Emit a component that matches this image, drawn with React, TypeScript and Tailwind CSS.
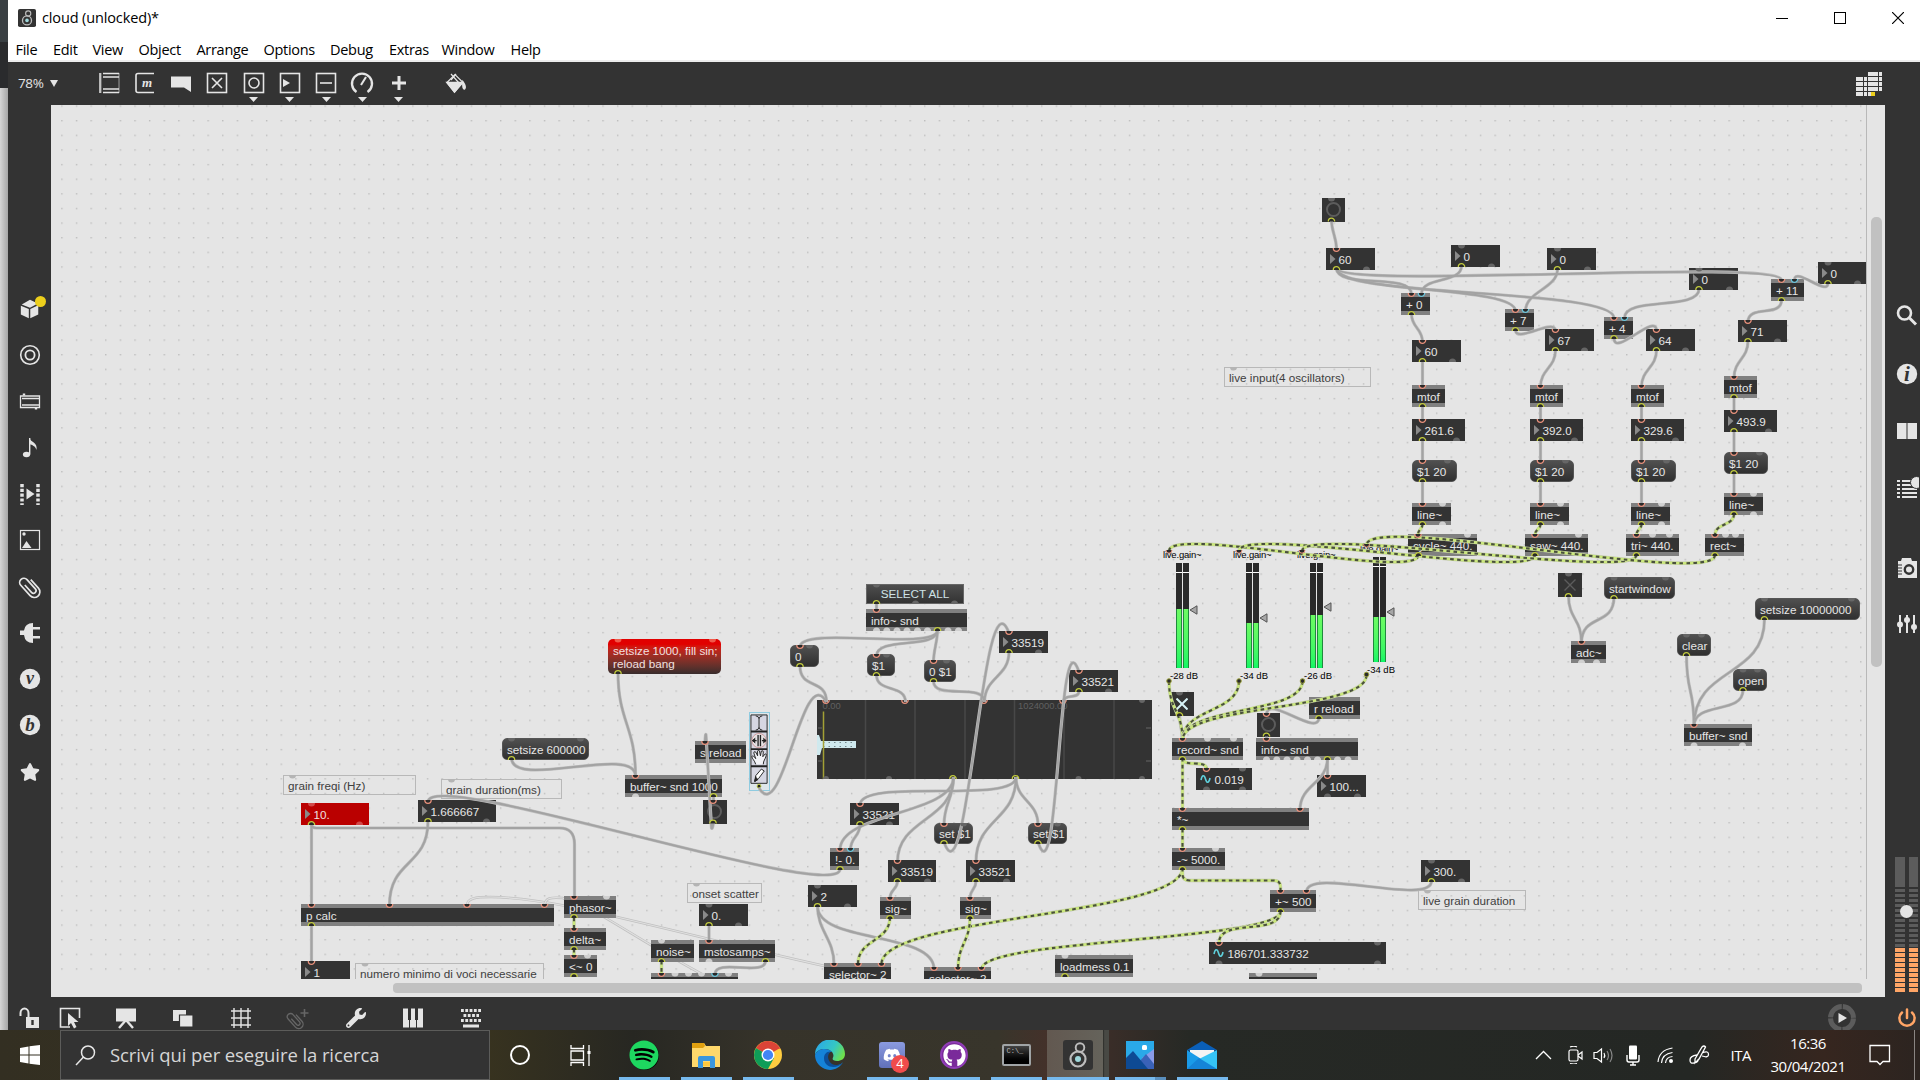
import React from "react";
import { FaSpotify, FaGithub, FaDiscord, FaWrench, FaStar } from "react-icons/fa";

const OX = 51;
const OY = 105;

type Kind = "num" | "obj" | "msg" | "note" | "bang" | "toggle" | "red" | "redmsg" | "sig" | "menu";
type Node = { k: Kind; x: number; y: number; w: number; h?: number; t?: string; i?: string; o?: string; on?: boolean };

// Port strings list "<colour><x offset>": r red, c cyan, y yellow, g unused.
const N: Node[] = [
  { k: "bang", x: 1321.5, y: 198, w: 23.5, h: 23.5, i: "g9.5", o: "y9.5" },
  { k: "num", x: 1326, y: 248, w: 49, t: "60", i: "r10", o: "y10 g40" },
  { k: "num", x: 1451, y: 245, w: 49, t: "0", i: "g10", o: "y10 g40" },
  { k: "num", x: 1547, y: 248, w: 49, t: "0", i: "g10", o: "y10 g40" },
  { k: "num", x: 1689, y: 268, w: 49, t: "0", i: "g9.5", o: "y9.5 g40" },
  { k: "num", x: 1818, y: 262, w: 49, t: "0", i: "g9.5", o: "y9.5 g39" },
  { k: "obj", x: 1401, y: 293, w: 29, t: "+ 0", i: "r10 c20", o: "y10" },
  { k: "obj", x: 1505, y: 309, w: 29, t: "+ 7", i: "r10 c20", o: "y10" },
  { k: "obj", x: 1604, y: 317, w: 29, t: "+ 4", i: "r9.5 c20", o: "y9.5" },
  { k: "obj", x: 1771, y: 279, w: 33, t: "+ 11", i: "r10 c23", o: "y10" },
  { k: "num", x: 1545, y: 329, w: 49, t: "67", i: "r10", o: "y10 g39" },
  { k: "num", x: 1646, y: 329, w: 49, t: "64", i: "r10", o: "y10 g39" },
  { k: "num", x: 1738, y: 320, w: 49, t: "71", i: "r9.5", o: "y9.5 g39" },
  { k: "num", x: 1412, y: 340, w: 49, t: "60", i: "r10", o: "y10 g40" },
  { k: "note", x: 1224, y: 367, w: 147, h: 20, t: "live input(4 oscillators)", i: "g9" },
  { k: "obj", x: 1412, y: 385, w: 33, t: "mtof", i: "r10", o: "y10" },
  { k: "obj", x: 1530, y: 385, w: 33, t: "mtof", i: "r10", o: "y10" },
  { k: "obj", x: 1631, y: 385, w: 33, t: "mtof", i: "r10", o: "y10" },
  { k: "obj", x: 1724, y: 376, w: 33, t: "mtof", i: "r9.5", o: "y9.5" },
  { k: "num", x: 1412, y: 419, w: 53, t: "261.6", i: "r10", o: "y10 g44" },
  { k: "num", x: 1530, y: 419, w: 53, t: "392.0", i: "r10", o: "y10 g44" },
  { k: "num", x: 1631, y: 419, w: 53, t: "329.6", i: "r10", o: "y10 g44" },
  { k: "num", x: 1724, y: 410, w: 53, t: "493.9", i: "r9.5", o: "y9.5 g44" },
  { k: "msg", x: 1412, y: 460, w: 45, t: "$1 20", i: "r10 g35", o: "y10" },
  { k: "msg", x: 1530, y: 460, w: 44, t: "$1 20", i: "r10 g35", o: "y10" },
  { k: "msg", x: 1631, y: 460, w: 45, t: "$1 20", i: "r10 g35", o: "y10" },
  { k: "msg", x: 1724, y: 452, w: 44, t: "$1 20", i: "r9.5 g35", o: "y9.5" },
  { k: "obj", x: 1412, y: 503, w: 39, t: "line~", i: "r10 g30", o: "y10 g30" },
  { k: "obj", x: 1530, y: 503, w: 39, t: "line~", i: "r10 g30", o: "y10 g30" },
  { k: "obj", x: 1631, y: 503, w: 39, t: "line~", i: "r10 g30", o: "y10 g30" },
  { k: "obj", x: 1724, y: 493, w: 39, t: "line~", i: "r9.5 g29", o: "y9.5 g29" },
  { k: "obj", x: 1408, y: 534, w: 69, t: "cycle~ 440.", i: "r9.5 g59", o: "y10" },
  { k: "obj", x: 1525, y: 534, w: 63, t: "saw~ 440.", i: "r9.5 g53", o: "y9.5" },
  { k: "obj", x: 1626, y: 534, w: 53, t: "tri~ 440.", i: "r10 g26 g43", o: "y10" },
  { k: "obj", x: 1705, y: 534, w: 39, t: "rect~", i: "r9.5 g20 g30", o: "y9.5" },
  { k: "toggle", x: 1170, y: 692, w: 24, h: 24, i: "g9", o: "y9", on: true },
  { k: "obj", x: 1309, y: 697, w: 51, t: "r reload", o: "y9.5" },
  { k: "bang", x: 1256.5, y: 713, w: 23.5, h: 23.5, i: "r9.5", o: "y9.5" },
  { k: "obj", x: 1172, y: 738, w: 71, t: "record~ snd", i: "r10 g35 g61", o: "y10" },
  { k: "obj", x: 1256, y: 738, w: 102, t: "info~ snd", i: "r10", o: "g10 g20.3 g30.5 g40.5 g51 g61 y71 g81 g91.5" },
  { k: "sig", x: 1196, y: 768, w: 56, t: "0.019", i: "r10 g46", o: "g10 g46" },
  { k: "num", x: 1317, y: 775, w: 49, t: "100...", i: "r10", o: "g10 g40" },
  { k: "obj", x: 1172, y: 808, w: 137, t: "*~", i: "r10 r127.5", o: "y10" },
  { k: "obj", x: 1172, y: 848, w: 53, t: "-~ 5000.", i: "r10 g43", o: "y10" },
  { k: "obj", x: 1270, y: 890, w: 46, t: "+~ 500", i: "r10 r36", o: "y10" },
  { k: "num", x: 1421, y: 860, w: 49, t: "300.", i: "g10", o: "y10 g40" },
  { k: "note", x: 1418, y: 890, w: 108, h: 20, t: "live grain duration", i: "g9" },
  { k: "sig", x: 1209, y: 942, w: 177, t: "186701.333732", i: "r9.5 g168", o: "g9.5 g168" },
  { k: "obj", x: 1249, y: 973, w: 68, i: "g9.5" },
  { k: "toggle", x: 1558, y: 573, w: 24, h: 24, i: "g10", o: "y10" },
  { k: "msg", x: 1604, y: 577, w: 71, t: "startwindow", i: "g9.5 g61", o: "y9.5" },
  { k: "msg", x: 1755, y: 598, w: 105, t: "setsize 10000000", i: "g9 g96", o: "y9" },
  { k: "msg", x: 1677, y: 634, w: 34, t: "clear", i: "g9 g24", o: "y9" },
  { k: "msg", x: 1733, y: 669, w: 34, t: "open", i: "g9.5 g24", o: "y9.5" },
  { k: "obj", x: 1684, y: 724, w: 68, t: "buffer~ snd", i: "r9.5", o: "g9.5 g58" },
  { k: "obj", x: 1571, y: 641, w: 35, t: "adc~", i: "r10", o: "g10 g25" },
  { k: "menu", x: 866, y: 584, w: 98, h: 20, t: "SELECT ALL", i: "g10", o: "y10 g49 g88" },
  { k: "obj", x: 866, y: 609, w: 101, t: "info~ snd", i: "r10", o: "g10 g20.3 g30.5 g40.5 g51 y71 g61 g81.5 g92" },
  { k: "msg", x: 790, y: 645, w: 29, t: "0", i: "r9.5 g19", o: "y9.5" },
  { k: "msg", x: 867, y: 654, w: 28, t: "$1", i: "r9 g19", o: "y9" },
  { k: "msg", x: 924, y: 660, w: 32, t: "0 $1", i: "r9 g22", o: "y9" },
  { k: "num", x: 999, y: 631, w: 49, t: "33519", i: "r9.5", o: "y9.5 g39" },
  { k: "num", x: 1069, y: 670, w: 49, t: "33521", i: "r9.5", o: "y9.5 g39" },
  { k: "obj", x: 695, y: 741, w: 51, t: "s reload", i: "r9.5" },
  { k: "obj", x: 625, y: 775, w: 97, t: "buffer~ snd 1000", i: "r10", o: "g10 y88" },
  { k: "bang", x: 703, y: 800, w: 23.5, h: 23.5, i: "r9.5", o: "y9.5" },
  { k: "num", x: 850, y: 803, w: 49, t: "33521", i: "r9.5", o: "y9.5 g39" },
  { k: "obj", x: 830, y: 848, w: 29, t: "!- 0.", i: "r9.5 c20", o: "y9.5" },
  { k: "msg", x: 934, y: 823, w: 39, h: 21, t: "set $1", i: "r9.5 g29", o: "y9.5" },
  { k: "msg", x: 1028, y: 823, w: 39, h: 21, t: "set $1", i: "r9.5 g29", o: "y9.5" },
  { k: "num", x: 888, y: 860, w: 48, t: "33519", i: "r9", o: "y9 g39" },
  { k: "num", x: 966, y: 860, w: 49, t: "33521", i: "r9.5", o: "y9.5 g40" },
  { k: "obj", x: 880, y: 897, w: 31, t: "sig~", i: "r9.5", o: "y9.5" },
  { k: "obj", x: 960, y: 897, w: 31, t: "sig~", i: "r9.5", o: "y9.5" },
  { k: "num", x: 808, y: 885, w: 49, t: "2", i: "g9", o: "y9 g39" },
  { k: "obj", x: 824, y: 963, w: 67, t: "selector~ 2", i: "r9.5 r33.5 r57" },
  { k: "obj", x: 924, y: 967, w: 67, t: "selector~ 2", i: "r9.5 r33.5 r57" },
  { k: "obj", x: 1055, y: 955, w: 78, t: "loadmess 0.1", i: "g9.5", o: "y9.5" },
  { k: "note", x: 687, y: 883, w: 75, h: 20, t: "onset scatter", i: "g9" },
  { k: "num", x: 699, y: 904, w: 49, t: "0.", i: "g9.5", o: "y9.5 g39" },
  { k: "obj", x: 699, y: 940, w: 76, t: "mstosamps~", i: "r9.5", o: "g9.5 y66" },
  { k: "obj", x: 651, y: 940, w: 43, t: "noise~", i: "g10", o: "y10" },
  { k: "obj", x: 651, y: 973, w: 87, i: "r10 g23.5 g37 g50 c63.5 g77" },
  { k: "redmsg", x: 608, y: 639, w: 113, h: 35, t: "setsize 1000, fill sin;\nreload bang", i: "g9.5 g104", o: "y9.5" },
  { k: "msg", x: 502, y: 738, w: 87, t: "setsize 600000", i: "g9 g78", o: "y9" },
  { k: "note", x: 283, y: 775, w: 133, h: 20, t: "grain freqi (Hz)", i: "g9" },
  { k: "red", x: 301, y: 803, w: 68, t: "10.", i: "g10", o: "y10 g58" },
  { k: "note", x: 441, y: 779, w: 121, h: 20, t: "grain duration(ms)", i: "g10" },
  { k: "num", x: 418, y: 800, w: 78, t: "1.666667", i: "r9.5", o: "y9.5 g68" },
  { k: "obj", x: 301, y: 904, w: 253, t: "p calc", i: "r10 r88 r165.5 r243", o: "y10" },
  { k: "num", x: 301, y: 961, w: 49, t: "1", i: "r10" },
  { k: "note", x: 355, y: 963, w: 189, h: 20, t: "numero minimo di voci necessarie", i: "g9.5" },
  { k: "obj", x: 564, y: 896, w: 52, t: "phasor~", i: "r9.5 g42", o: "y9.5" },
  { k: "obj", x: 564, y: 928, w: 42, t: "delta~", i: "r9.5", o: "y9.5" },
  { k: "obj", x: 564, y: 955, w: 33, t: "<~ 0", i: "r9.5 g23", o: "y9.5" },
];

// Cord: x1, y1, x2, y2, handle length
type C = [number, number, number, number, number];
const cords: C[] = [
  [1331, 220, 1336, 249, 12], [1336, 268, 1411, 294, 22], [1336, 268, 1515, 311, 26], [1336, 268, 1613.5, 318, 30],
  [1336, 268, 1781, 280, 22], [1461, 266, 1421, 294, 18], [1557, 269, 1525, 311, 20], [1698.5, 289, 1624, 318, 22],
  [1827.5, 283, 1794, 280, 14], [1411, 314, 1422, 342, 14], [1515, 330, 1555, 331, 14], [1613.5, 338, 1656, 331, 20],
  [1781, 300, 1747.5, 322, 18], [1422, 361, 1422, 387, 5], [1422, 406, 1422, 421, 4], [1422, 440, 1422, 462, 4],
  [1422, 481, 1422, 504, 4], [1555, 350, 1540, 387, 18], [1540, 406, 1540, 421, 4], [1540, 440, 1540, 462, 4],
  [1540, 481, 1540, 504, 4], [1656, 350, 1641, 387, 18], [1641, 406, 1641, 421, 4], [1641, 440, 1641, 462, 4],
  [1641, 481, 1641, 504, 4], [1747.5, 341, 1733.5, 378, 18], [1733.5, 397, 1733.5, 412, 4], [1733.5, 431, 1733.5, 453, 4],
  [1733.5, 473, 1733.5, 495, 4], [1179, 715, 1182, 740, 10], [1431, 881, 1306, 892, 26], [1266, 735, 1266, 740, 1],
  [1318.5, 717, 1266, 715, 22], [1327, 758, 1327, 777, 4], [1327, 758, 1299.5, 810, 26], [1568, 595, 1581, 643, 25],
  [1613.5, 597, 1581, 643, 30], [1686, 655, 1693.5, 726, 40], [1742.5, 690, 1693.5, 726, 25], [1764, 619, 1693.5, 726, 60],
  [876, 602, 876, 611, 2], [937, 630, 799.5, 647, 22], [937, 630, 876, 656, 20], [937, 630, 933, 662, 12],
  [799.5, 666, 826, 702, 24], [876, 675, 905, 702, 18], [933, 681, 984, 702, 20], [1008.5, 652, 984, 702, 25],
  [1078.5, 691, 1063, 702, 9], [953, 777, 943.5, 825, 22], [953, 777, 897, 862, 44], [953, 777, 839.5, 850, 38],
  [1015.5, 777, 859.5, 805, 28], [1015.5, 777, 975.5, 862, 44], [1015.5, 777, 1037.5, 825, 24], [859.5, 824, 850, 850, 14],
  [839.5, 869, 427.5, 802, 36], [897, 881, 889.5, 898, 9], [975.5, 881, 969.5, 898, 9], [817, 906, 833.5, 964, 25],
  [817, 906, 933.5, 969, 38], [708.5, 925, 708.5, 942, 4], [765, 961, 714.5, 974, 16], [617.5, 672, 635, 776, 50],
  [511, 758, 635, 776, 32], [311, 824, 311, 905, 10], [427.5, 821, 389, 905, 46], [311, 925, 311, 963, 6],
  [713, 796, 713, 802, 1],
];
const shapedCords = [
  "M758.5 788C782 828 802 660 826 702",
  "M943.5 842C968 912 982 563 1008.5 633",
  "M1037.5 842C1059 907 1057 607 1078.5 672",
  "M311 824Q311 828 316 828H559Q574 828 574 844V897",
  "M713 822Q712 830 711 828L705.5 735Q705 732 704.5 742",
];
const signals: C[] = [
  [1422, 524, 1417.5, 535, 6], [1540, 524, 1534.5, 535, 6], [1641, 524, 1636, 535, 6], [1733.5, 514, 1714.5, 535, 12],
  [1418, 555, 1168.5, 551, 26], [1534.5, 555, 1238.5, 551, 26], [1636, 555, 1301.5, 551, 26], [1714.5, 555, 1366, 545, 32],
  [1168.5, 681, 1182, 740, 30], [1238.5, 681, 1182, 740, 32], [1302, 681, 1182, 740, 34], [1366, 675, 1182, 740, 36],
  [1182, 758, 1206, 769, 10], [1182, 758, 1182, 810, 10], [1182, 829, 1182, 850, 4], [1182, 868, 881, 964, 48],
  [1280, 911, 981, 969, 30], [1280, 911, 1218.5, 943, 26], [889.5, 917, 857.5, 964, 25], [969.5, 917, 957.5, 969, 25],
  [661, 961, 661, 974, 3], [573.5, 918, 573.5, 930, 3], [573.5, 949, 573.5, 957, 2],
];
const cPath = ([a, b, c, d, k]: C) => `M${a} ${b}C${a} ${b + k} ${c} ${d - k} ${c} ${d}`;

function Layer({ children }: { children: React.ReactNode }) {
  return (
    <svg className="absolute inset-0 h-full w-full" viewBox="51 105 1814 874" fill="none">
      {children}
    </svg>
  );
}

const BODY: Record<Kind, string> = {
  num: "bg-[#333] text-[#e6e6e6]",
  sig: "bg-[#333] text-[#e6e6e6]",
  obj: "border-y-4 border-[#808080] bg-[#333] pl-[5px] text-[#e6e6e6]",
  msg: "rounded-[5px] bg-linear-to-b from-[#505050] to-[#303030] border border-[#555] pl-[4px] text-[#e6e6e6]",
  redmsg: "rounded-[5px] bg-linear-to-b from-[#e10000] from-15% to-[#382c2c] pl-[5px] pt-px text-[#f0e0e0]",
  note: "border-[1.5px] border-[#b8b8b8] pl-[4px] text-[#404040]",
  bang: "bg-[#333]",
  toggle: "bg-[#333]",
  red: "bg-[#ba0000] text-[#f0e0e0]",
  menu: "justify-center border border-[#666] bg-linear-to-b from-[#4e4e4e] to-[#333] pb-px text-[#cfe3e6]",
};

function Box({ n }: { n: Node }) {
  return (
    <div
      className={`absolute flex items-center overflow-hidden whitespace-pre text-[11.7px] leading-[13px] ${BODY[n.k]}`}
      style={{ left: n.x - OX, top: n.y - OY, width: n.w, height: n.h ?? 22 }}
    >
      {(n.k === "num" || n.k === "red") && (
        <svg className="ml-[4px] mr-[2.4px] h-3 w-[6px] shrink-0" viewBox="0 0 6 12"><path d="M0 1L5.5 6L0 11Z" fill="#8a8a8a" /></svg>
      )}
      {n.k === "sig" && (
        <svg className="ml-[4px] mr-[3.5px] h-3 w-[11px] shrink-0" viewBox="0 0 11 12" fill="none"><path d="M1 7C2 2 4 1 5.5 6S9 10 10 5" stroke="#5fd0dc" strokeWidth="1.6" /></svg>
      )}
      {n.k === "bang" && <span className="mx-auto size-[15px] rounded-full border-2 border-[#5c5c5c]" />}
      {n.k === "toggle" && (
        <svg className="mx-auto size-3" viewBox="0 0 12 12"><path d="M0.5 0.5L11.5 11.5M11.5 0.5L0.5 11.5" stroke={n.on ? "#d8f3f7" : "#5c5c5c"} strokeWidth={n.on ? 2 : 1.4} /></svg>
      )}
      {n.t}
    </div>
  );
}

const PORT: Record<string, string> = { r: "#e8917c", c: "#6cc6dc", y: "#c3cc3f" };

function Ports() {
  const out: React.ReactElement[] = [];
  N.forEach((n, j) => {
    const unused = n.k === "obj" ? "#d0d0d0" : n.k === "note" ? "#b4b4b4" : n.k === "red" ? "#d24a4a" : n.k === "redmsg" ? "#ef5a4a" : "#666";
    const b = n.y + (n.h ?? 22);
    (n.i ?? "").split(" ").filter(Boolean).forEach((p, q) => {
      const x = n.x + parseFloat(p.slice(1));
      out.push(p[0] === "g"
        ? <path key={`i${j}-${q}`} d={`M${x - 3.5} ${n.y}A3.5 3.5 0 0 0 ${x + 3.5} ${n.y}Z`} fill={unused} />
        : <path key={`i${j}-${q}`} d={`M${x - 3.2} ${n.y}A3.2 3.4 0 0 0 ${x + 3.2} ${n.y}`} fill="#2a2a2a" stroke={PORT[p[0]]} strokeWidth="1.3" />);
    });
    (n.o ?? "").split(" ").filter(Boolean).forEach((p, q) => {
      const x = n.x + parseFloat(p.slice(1));
      out.push(p[0] === "g"
        ? <path key={`o${j}-${q}`} d={`M${x - 3.5} ${b}A3.5 3.5 0 0 1 ${x + 3.5} ${b}Z`} fill={unused} />
        : <path key={`o${j}-${q}`} d={`M${x - 3.2} ${b}A3.2 3.4 0 0 1 ${x + 3.2} ${b}`} fill="#2a2a2a" stroke={PORT[p[0]]} strokeWidth="1.3" />);
    });
  });
  return <>{out}</>;
}

function Gain({ x, y, level, knob, db }: { x: number; y: number; level: number; knob: number; db: string }) {
  return (
    <div className="absolute w-[48px] text-[9.5px] leading-[11px] text-black" style={{ left: x - OX, top: y - OY }}>
      <div className="tracking-[-0.2px]">live.gain~</div>
      <div className="relative ml-[12.5px] mt-[3px] flex h-[105px] w-[13px] gap-px bg-[#e5e5e5]">
        {[0, 1].map((i) => (
          <div key={i} className="flex flex-1 flex-col bg-[#2a2a2a]">
            <div className="mt-[9px] h-px bg-white" />
            <div className="mt-auto border-x border-[#1f8a3d] bg-linear-to-b from-[#6cfb62] to-[#0cf765]" style={{ height: level }} />
          </div>
        ))}
        <svg className="absolute left-[13px] h-[10px] w-[9px]" style={{ top: knob }} viewBox="0 0 9 10"><path d="M1 5L8 0.8V9.2Z" fill="#a6a6a6" stroke="#555" /></svg>
      </div>
      <div className="ml-[7px] mt-[2px]">{db}</div>
    </div>
  );
}

function Waveform() {
  return (
    <div className="absolute left-[766px] top-[595px] h-[79px] w-[335px] bg-[#333]">
      <svg className="h-full w-full" viewBox="817 700 335 79">
        <path d="M865.5 700V779M915 700V779M965 700V779M1014.5 700V779M1064 700V779M1114 700V779" stroke="#484848" strokeWidth="1.5" />
        <path d="M1146 728H1151M1146 761H1151M818 728H822M818 761H822" stroke="#555" strokeWidth="1.3" />
        <path d="M817 735H819L821 741H856V748H822L820 755H817Z" fill="#cfe9ee" />
        <path d="M823 742.5H853M823 746.5H853" stroke="#5d7074" strokeWidth="0.8" strokeDasharray="1.5 4" />
        <path d="M823.5 711.5V779" stroke="#a3a035" strokeWidth="1.5" />
        <text x="822.5" y="709" fontSize="9.4" fill="#606060">0.00</text>
        <text x="1018" y="709" fontSize="9.4" fill="#606060">1024000.00</text>
        {[826, 905, 984, 1063].map((x) => <path key={x} d={`M${x - 3.2} 700A3.2 3.4 0 0 0 ${x + 3.2} 700`} fill="#2a2a2a" stroke="#e8917c" strokeWidth="1.3" />)}
        {[953, 1015.5].map((x) => <path key={x} d={`M${x - 3.2} 779A3.2 3.4 0 0 1 ${x + 3.2} 779`} fill="#2a2a2a" stroke="#c3cc3f" strokeWidth="1.3" />)}
        {[826, 889, 1078.5, 1142].map((x) => <circle key={x} cx={x} cy="779" r="3" fill="#666" />)}
        <circle cx="1142" cy="700" r="3" fill="#666" />
      </svg>
    </div>
  );
}

function ToolStrip() {
  return (
    <div className="absolute left-[698px] top-[607px] h-[79px] w-[21px] border border-[#8fcbe0] bg-[#dfe6ea]">
      <svg className="h-full w-full" viewBox="0 0 20 77" fill="none" stroke="#222">
        <path d="M1 0H18V72H1Z" fill="#d6d6e2" stroke="#222" strokeWidth="1" />
        <path d="M1 17.5H18M1 36H18M1 54H18" strokeWidth="2" />
        <path d="M6 1Q9 1 9.5 4V13Q9 16 6 16M13 1Q10 1 9.5 4M9.5 13Q10 16 13 16" />
        <circle cx="9.5" cy="27" r="7.5" fill="#e4e0e2" stroke="#cf9a9a" />
        <path d="M8.5 21V33M11 21V33M2.5 27H7M12.5 27H17" strokeWidth="1.4" />
        <path d="M5.5 24.5L2.5 27L5.5 29.5M14 24.5L17 27L14 29.5" fill="#222" />
        <path d="M6 52C5 48 2 46 2 44S5 44 6 46L4 40Q4 38 6 39L8 43L8 38Q9 36 10 38L11 43L12 38Q14 37 14 39L13.5 44L16 41Q18 41 17 43C16 47 14 48 14 52" fill="#f2f2f6" />
        <path d="M5 70L6 64L12 57L15 59L9 67ZM5 70L6.5 65" fill="#fff" />
        <path d="M5 70L6 66L8.5 68Z" fill="#222" />
        <circle cx="9.5" cy="75" r="2" fill="#222" stroke="#c3cc3f" />
      </svg>
    </div>
  );
}

function Patcher() {
  return (
    <div className="grid flex-1 grid-cols-[1816px_1fr] grid-rows-[874px_1fr] bg-[#e5e5e5]">
      <div className="relative overflow-hidden border-r border-[#b8b8b8]">
        <Layer>
          <defs>
            <pattern id="dots" x="60.7" y="105.4" width="14.625" height="14.625" patternUnits="userSpaceOnUse">
              <rect width="1.4" height="1.4" fill="#bcbcbc" />
            </pattern>
          </defs>
          <rect x="51" y="105" width="1815" height="874" fill="url(#dots)" />
          {["M466.5 905C467 898 475 897 490 897C560 898 640 925 833 968", "M544 905C545 898 550 897 562 898C600 910 620 930 703 975"].map((d) => (
            <g key={d}><path d={d} stroke="#c0c0c0" strokeWidth="2.6" /><path d={d} stroke="#e0e0e0" strokeWidth="1.2" /></g>
          ))}
        </Layer>
        {N.map((n, i) => <Box key={i} n={n} />)}
        <Waveform />
        <ToolStrip />
        <Gain x={1163} y={549} level={59} knob={42} db="-28 dB" />
        <Gain x={1233} y={549} level={45} knob={50} db="-34 dB" />
        <Gain x={1297} y={549} level={53} knob={39} db="-26 dB" />
        <Gain x={1360} y={543} level={45} knob={50} db="-34 dB" />
        <Layer>
          <g stroke="#bdbdbd" strokeWidth="3.2">
            {cords.map((c, i) => <path key={i} d={cPath(c)} />)}
            {shapedCords.map((d) => <path key={d} d={d} />)}
          </g>
          <g stroke="#a3a3a3" strokeWidth="2">
            {cords.map((c, i) => <path key={i} d={cPath(c)} />)}
            {shapedCords.map((d) => <path key={d} d={d} />)}
          </g>
          {[...signals.map(cPath), "M1182 868V874Q1182 880.5 1189 880.5H1273Q1280 880.5 1280 887V892"].map((d) => (
            <g key={d}>
              <path d={d} stroke="#c4cbae" strokeWidth="3.4" />
              <path d={d} stroke="#cbe87c" strokeWidth="2.4" />
              <path d={d} stroke="#4a503e" strokeWidth="2.1" strokeDasharray="3.6 3.4" />
            </g>
          ))}
          <Ports />
          {[[1168.5, 551], [1238.5, 551], [1301.5, 551], [1366, 545]].map(([x, y]) => <path key={x} d={`M${x - 3} ${y - 1}A3 3.2 0 0 0 ${x + 3} ${y - 1}`} fill="#2a2a2a" stroke="#e8917c" />)}
          {[[1168.5, 681], [1238.5, 681], [1302, 681], [1366, 674.5]].map(([x, y]) => <circle key={x} cx={x} cy={y} r="2.3" fill="#2a2a2a" stroke="#9aa03a" />)}
        </Layer>
      </div>
      <div className="pl-[4px] pt-[112px]"><div className="h-[450px] w-[11px] rounded-[5px] bg-[#c1c1c1]" /></div>
      <div className="pl-[342px] pt-1"><div className="h-[10px] w-[1469px] rounded-[4px] bg-[#c1c1c1]" /></div>
    </div>
  );
}

function Ico({ children, className = "size-6" }: { children: React.ReactNode; className?: string }) {
  return <svg className={`${className} shrink-0`} viewBox="0 0 24 24" fill="none" stroke="#e5e5e5" strokeWidth="1.6">{children}</svg>;
}

const clip = (
  <g transform="rotate(-42 12 12)">
    <path d="M9.5 7V17A2.600 2.600 0 0 0 14.700 17V4.500A4.200 4.200 0 0 0 6.300 4.500V18.500A5.600 5.600 0 0 0 17.500 18.500V7" strokeWidth="1.700" />
  </g>
);

const leftIcons = [
  <div className="relative">
    <Ico className="size-[22px]"><path d="M3 7L12 2L20.500 6L12 10.500ZM2 8.500L10.700 12V22L2 18ZM12.300 12L21 8V18L12.300 22Z" fill="#e5e5e5" stroke="none" /></Ico>
    <span className="absolute -right-[5px] -top-[2px] size-[11px] rounded-full bg-[#edcf1c]" />
  </div>,
  <Ico><circle cx="12" cy="12" r="9.3" /><circle cx="12" cy="12" r="4.6" strokeWidth="1.8" /></Ico>,
  <Ico><path d="M2.5 6H21.500V17.500H2.500ZM4 8.500H21M4 15H21" strokeWidth="1.3" /><path d="M6 3.500V5.500M18 17.500V19.500" strokeWidth="2.4" /></Ico>,
  <Ico><ellipse cx="8.5" cy="18.5" rx="3.6" ry="2.8" fill="#e5e5e5" stroke="none" /><path d="M11.7 18.5V2" strokeWidth="1.4" /><path d="M11.5 2C12 6 20 6 18.500 14C17.500 10 14 9 11.500 8Z" fill="#e5e5e5" stroke="none" /></Ico>,
  <Ico><path d="M4 2V23M20 2V23" strokeWidth="3.5" strokeDasharray="3.2 1.6" /><path d="M8.5 6.5L16.500 12L8.500 17.500Z" fill="#e5e5e5" stroke="none" /></Ico>,
  <Ico><rect x="2.5" y="2.5" width="19" height="19" strokeWidth="1.2" /><circle cx="6" cy="6" r="1.7" fill="#e5e5e5" stroke="none" /><path d="M4 20L8.500 13L13.500 20Z" fill="#e5e5e5" stroke="none" /></Ico>,
  <Ico>{clip}</Ico>,
  <Ico><path d="M6 9.5Q7 2 15 2V22Q7 22 6 14H2V9.500ZM15 6H22V8.500H15ZM15 15H22V17.500H15Z" fill="#e5e5e5" stroke="none" /></Ico>,
  <Ico><circle cx="12" cy="12" r="10.2" fill="#e5e5e5" stroke="none" /><text x="12" y="16.5" textAnchor="middle" fontFamily="Liberation Serif" fontStyle="italic" fontWeight="bold" fontSize="18" fill="#333" stroke="none">v</text></Ico>,
  <Ico><circle cx="12" cy="12" r="10.2" fill="#e5e5e5" stroke="none" /><text x="12" y="18" textAnchor="middle" fontFamily="Liberation Serif" fontStyle="italic" fontWeight="bold" fontSize="19" fill="#333" stroke="none">b</text></Ico>,
  <FaStar className="size-5 text-[#e5e5e5]" />,
];

const rightIcons: [string, React.ReactElement][] = [
  ["h-[58px]", <Ico><circle cx="9.5" cy="9" r="6.5" strokeWidth="2.6" /><path d="M14.5 14L21 20.500" strokeWidth="3" /></Ico>],
  ["h-[57px]", <Ico><circle cx="12" cy="12" r="10.2" fill="#e5e5e5" stroke="none" /><text x="12" y="18.5" textAnchor="middle" fontFamily="Liberation Serif" fontStyle="italic" fontWeight="bold" fontSize="21" fill="#333" stroke="none">i</text></Ico>],
  ["h-[57px]", <Ico><path d="M2 4H11.500V20H2ZM12.500 4H22V20H12.500Z" fill="#e5e5e5" stroke="none" /></Ico>],
  ["h-[57px]", <Ico><path d="M2 5H5M7 5H18M2 9H5M7 9H22M2 13H5M7 13H22M2 17H5M7 17H22M2 21H5M7 21H22" strokeWidth="2" /><circle cx="21.5" cy="6.5" r="6" fill="#e5e5e5" stroke="#333" strokeWidth="1" /></Ico>],
  ["mt-[23px] h-[56px]", <Ico><path d="M6 5L7 2H16L17 5H22V22H3V5Z" fill="#e5e5e5" stroke="none" /><circle cx="14" cy="13.5" r="4.2" stroke="#333" strokeWidth="2.4" /><path d="M3 9H7M3 12H7M3 15H7M3 18H7" stroke="#333" strokeWidth="1.2" /></Ico>],
  ["h-[12px]", <Ico><path d="M5 3V21M12 3V21M19 3V21" strokeWidth="2" /><g fill="#e5e5e5" stroke="none"><circle cx="5" cy="12.5" r="3" /><circle cx="12" cy="8" r="3" /><circle cx="19" cy="15" r="3" /></g></Ico>],
];

function Meter() {
  return (
    <div className="relative flex w-[24px] gap-1 pr-px">
      {[0, 1].map((c) => (
        <div key={c} className="flex flex-1 flex-col">
          <div className="mb-[2px] h-[30px] bg-[#5c5c5c]" />
          {Array.from({ length: 12 }, (_, i) => <div key={i} className="mb-[2px] h-[3px] bg-[#5c5c5c]" />)}
          <div className="-mt-px" />
          {Array.from({ length: 9 }, (_, i) => <div key={i} className="mb-px h-1 bg-[#ffa566]" />)}
        </div>
      ))}
      <span className="absolute left-[5px] top-[48px] size-[13px] rounded-full bg-[#e5e5e5]" />
    </div>
  );
}

const sq = <rect x="2.5" y="2.5" width="19" height="19" />;
const tools: [React.ReactElement, boolean][] = [
  [<g strokeWidth="1.5"><path d="M3 2V22M6 2.500H22M6 6H22M6 18H22M6 21.500H22" /><path d="M22 2V22M4 2V22" strokeWidth="0.6" /></g>, false],
  [<><path d="M21 2.500H5Q3 2.500 3 4.500V19.500Q3 21.500 5 21.500H21" /><text x="14" y="16" textAnchor="middle" fontFamily="Liberation Serif" fontStyle="italic" fontWeight="bold" fontSize="13" fill="#e5e5e5" stroke="none">m</text></>, false],
  [<path d="M2 5.500H22V21L15 16.500H2Z" fill="#e5e5e5" stroke="none" />, false],
  [<>{sq}<path d="M7 7L17 17M17 7L7 17" /></>, false],
  [<>{sq}<circle cx="12" cy="12" r="5" /></>, true],
  [<>{sq}<path d="M5 8L12 12L5 16Z" fill="#e5e5e5" stroke="none" /></>, true],
  [<>{sq}<path d="M6 12H18" /></>, true],
  [<><path d="M6.500 21A10 10 0 1 1 17.500 21" strokeWidth="2.3" /><path d="M11 14L16 6" strokeWidth="2" /></>, true],
  [<path d="M12 5V19M5 12H19" strokeWidth="3" />, true],
];

function ToolbarIcon({ g, arrow }: { g: React.ReactElement; arrow: boolean }) {
  return (
    <div className="flex w-[36.25px] flex-col items-center pt-[9px]">
      <Ico>{g}</Ico>
      {arrow && <svg className="mt-[2px] h-[5px] w-[9px]" viewBox="0 0 9 5"><path d="M0 0H9L4.500 5Z" fill="#e5e5e5" /></svg>}
    </div>
  );
}

const menus: [string, string][] = [
  ["File", "w-[37.5px]"], ["Edit", "w-[39.5px]"], ["View", "w-[46px]"], ["Object", "w-[58px]"], ["Arrange", "w-[67px]"],
  ["Options", "w-[66.5px]"], ["Debug", "w-[59px]"], ["Extras", "w-[52.5px]"], ["Window", "w-[69px]"], ["Help", "w-[60px]"],
];

const MaxLogo = ({ className }: { className: string }) => (
  <svg className={className} viewBox="0 0 30 30" fill="none">
    <rect width="30" height="30" rx="3" fill="#333" />
    <circle cx="15" cy="19" r="7.5" stroke="#bdbdbd" strokeWidth="2.2" /><circle cx="17" cy="7.5" r="4.3" stroke="#bdbdbd" strokeWidth="1.9" />
    <circle cx="15" cy="19" r="3" fill="#9fd8dc" />
  </svg>
);

const bottomIcons: React.ReactElement[] = [
  <Ico><path d="M3.500 10V7A4 4.500 0 0 1 11.500 7V11" strokeWidth="2" /><rect x="9" y="11" width="13" height="11" fill="#e5e5e5" stroke="none" /><path d="M15.500 14V19" stroke="#333" strokeWidth="2.4" /></Ico>,
  <Ico><path d="M12 21H2.500V2.500H21.500V12" /><path d="M10 7V20L13 17L16 22.500L18.500 21L16 16H20.500Z" fill="#e5e5e5" stroke="none" /></Ico>,
  <Ico><path d="M2 2.500H22V15.500H2Z" fill="#e5e5e5" stroke="none" /><path d="M12 14L5 22M12 14L19 22" strokeWidth="2.4" /></Ico>,
  <Ico><path d="M2 4H15V15H2Z" fill="#e5e5e5" stroke="none" /><path d="M8.500 9H22V21H8.500Z" fill="#e5e5e5" stroke="#333" strokeWidth="1.2" /></Ico>,
  <Ico><path d="M5 2V22M12 2V22M19 2V22M2 5H22M2 12H22M2 19H22" strokeWidth="1.4" /></Ico>,
  <svg className="size-6 shrink-0" viewBox="0 0 24 24" fill="none" stroke="#666"><g transform="translate(0 5) scale(.78)">{clip}</g><path d="M18.500 3V11M14.500 7H22.500" strokeWidth="1.6" /></svg>,
  <FaWrench className="size-5 text-[#e5e5e5]" />,
  <Ico><path d="M2 2.500H22V21.500H2Z" fill="#e5e5e5" stroke="none" /><path d="M8.500 2V22M15.500 2V22" stroke="#333" strokeWidth="1" /><path d="M8.500 2V14M15.500 2V14" stroke="#333" strokeWidth="3" /></Ico>,
  <Ico><path d="M2 4.500H22M2 14.500H22" strokeWidth="3" strokeDasharray="2.8 1.5" /><path d="M4.500 9.500H20" strokeWidth="3" strokeDasharray="2.8 1.5" /><path d="M4 20H20" strokeWidth="3" /></Ico>,
];

const apps: [React.ReactElement, string][] = [
  [<div className="flex size-[29px] items-center justify-center rounded-full bg-black"><FaSpotify className="size-[30px] shrink-0 text-[#1ed760]" /></div>, "full"],
  [<svg className="size-[28px]" viewBox="0 0 28 28"><path d="M0 2H12L14 5H28V26H0Z" fill="#ffd86b" /><path d="M0 2H12L13 5L11 7H0Z" fill="#e0a010" /><path d="M6 27V17Q6 15 8 15H21Q23 15 23 17V27H18V20H11V27Z" fill="#3a96dd" /><path d="M11 21H18V25H11Z" fill="#ffc83d" /></svg>, "full"],
  [<svg className="size-[28px]" viewBox="0 0 28 28"><circle cx="14" cy="14" r="14" fill="#ffcd40" /><path d="M14 14L1.900 7A14 14 0 0 1 26.100 7Z" fill="#db4437" /><path d="M14 14L1.900 7A14 14 0 0 0 14 28L20 17Z" fill="#0f9d58" /><path d="M14 7.500H26.400A14 14 0 0 0 26.100 7H14Z" fill="#db4437" /><circle cx="14" cy="14" r="6.5" fill="#fff" /><circle cx="14" cy="14" r="5.1" fill="#4285f4" /></svg>, "full"],
  [<svg className="size-[30px]" viewBox="0 0 30 30"><defs><linearGradient id="edg" x1="0" x2="1" y1="0.2" y2="0.6"><stop offset="0" stopColor="#2aa7e8" /><stop offset="0.6" stopColor="#35c7c4" /><stop offset="1" stopColor="#6fe04a" /></linearGradient></defs><path d="M0 15A15 15 0 0 1 30 14C30 19 26 21 22 21C18 21 17 19.500 18 17.500C20 13 15 9 10 9C4 9 1 12 0 15Z" fill="url(#edg)" /><path d="M0 15C2 8 13 7 17 12C11 11 9 22 17 25C21 26.500 26 25 28 22C25 28 18 31 12 29.500C5 28 0 22 0 15Z" fill="#1583d8" /><path d="M9 18C9 14 12 11 16 11.500C12 14 12 20 17 24C21 26 26 24.500 28 22.500C23 29 9 29 9 18Z" fill="#0c4f9a" /></svg>, "none"],
  [<div className="relative flex size-[26px] items-center justify-center rounded-[3px] bg-linear-to-b from-[#8b9be0] to-[#6070b8]"><FaDiscord className="size-[18px] text-white" /><span className="absolute -bottom-[5px] -right-[4px] flex size-[18px] items-center justify-center rounded-full bg-[#f04c4c] font-['Open_Sans'] text-[13px] text-white">4</span></div>, "full"],
  [<span className="flex size-[28px] items-center justify-center rounded-full border-2 border-[#8f3cb5] bg-[#7a2a9a]"><FaGithub className="size-[23px] text-white" /></span>, "full"],
  [<div className="h-[22px] w-[29px] rounded-[2px] border-2 border-[#a0a4a6] bg-linear-to-b from-[#444] to-black pl-[3px] pt-px font-['Liberation_Mono'] text-[7px] leading-[9px] text-[#bbb]">C:\_</div>, "full"],
  [<MaxLogo className="size-[30px]" />, "active"],
  [<svg className="size-[28px]" viewBox="0 0 28 28"><path d="M0 0H28V28H0Z" fill="#2aa9e8" /><path d="M16 17L28 8V28H16Z" fill="#8a9be8" /><path d="M28 23L20 13L14 20V28H28Z" fill="#3a62b8" /><path d="M0 17L7 10L22 28H0Z" fill="#0e4a94" /><rect x="16" y="4" width="5" height="5" rx="1.5" fill="#fff" /></svg>, "photos"],
  [<svg className="h-[28px] w-[30px]" viewBox="0 0 30 28"><path d="M0 9L15 0L30 9L15 14Z" fill="#0a5fb8" /><path d="M3 9H27V22H3Z" fill="#f4f4f4" /><path d="M0 9L30 28H0Z" fill="#1a9be8" /><path d="M30 9V28H26L12 18Z" fill="#35c3f5" /><path d="M0 28L12 17L30 28Z" fill="#1584d8" /></svg>, "full"],
];

function Taskbar() {
  return (
    <div className="flex h-[50px] shrink-0 bg-[linear-gradient(90deg,#332f22_0%,#38331f_25%,#272722_33%,#36332a_40%,#38352b_52%,#46302a_55%,#262925_62%,#242724_88%,#36261f_95%,#2c2420_100%)] font-['Open_Sans',sans-serif] text-white">
      <div className="flex w-[60px] items-center justify-center">
        <svg className="size-5" viewBox="0 0 20 20"><path d="M0 3L8.500 1.500V9.500H0ZM9.500 1.300L20 0V9.500H9.500ZM0 10.500H8.500V18.500L0 17ZM9.500 10.500H20V20L9.500 18.700Z" fill="#fff" /></svg>
      </div>
      <div className="flex w-[430px] items-center border border-[#5c5c5a] bg-[#333] pl-[14px]">
        <svg className="size-[21px]" viewBox="0 0 21 21" fill="none" stroke="#e8e8e8" strokeWidth="1.5"><circle cx="13" cy="7.5" r="6.5" /><path d="M8.500 12L1 20" /></svg>
        <span className="ml-[14px] whitespace-nowrap text-[18.5px] tracking-[-0.09px] text-[#d6d6d6]">Scrivi qui per eseguire la ricerca</span>
      </div>
      <div className="flex w-[60px] items-center justify-center"><span className="size-[20px] rounded-full border-[2.5px] border-white" /></div>
      <div className="flex w-[63px] items-center justify-start pl-[20px]">
        <svg className="size-[21px]" viewBox="0 0 21 21" fill="none" stroke="#fff" strokeWidth="1.3"><path d="M1 0V3.500H13.500V0M1 21V17.500H13.500V21M1 6H13.500V15H1ZM19 0V21" /><path d="M17.500 6H20.500V9H17.500Z" fill="#fff" stroke="none" /></svg>
      </div>
      {apps.map(([ic, st], i) => (
        <div key={i} className={`flex h-full w-[62px] flex-col items-center ${st === "active" ? "bg-[linear-gradient(90deg,#625850_0,#65635b_91%,#30312d_91%,#484944_93%)]" : ""}`}>
          <div className="flex h-[47px] items-center pt-[3px]">{ic}</div>
          {st === "full" && <div className="h-[3px] w-[51px] bg-[#76b9ed]" />}
          {st === "active" && <div className="h-[3px] w-full bg-[#76b9ed]" />}
          {st === "photos" && <div className="flex h-[3px] w-[51px] bg-[#76b9ed]"><div className="ml-auto w-[11px] bg-[#5a8fbd]" /></div>}
        </div>
      ))}
      <div className="ml-auto flex items-center">
        <svg className="h-[10px] w-[17px]" viewBox="0 0 17 10" fill="none" stroke="#fff" strokeWidth="1.3"><path d="M1 9L8.500 1.500L16 9" /></svg>
        <svg className="ml-[15px] size-[18px]" viewBox="0 0 18 18" fill="none" stroke="#fff" strokeWidth="1.2"><rect x="2" y="4" width="9" height="11" rx="1.5" /><path d="M11 9L15 6V13L11 10M3 1Q7 -0.500 10 1M3 17.500Q7 18.500 10 17.500" /></svg>
        <svg className="ml-[8px] size-[21px]" viewBox="0 0 21 21" fill="none" stroke="#fff" strokeWidth="1.2"><path d="M1 7.500H4L8.500 4V17L4 13.500H1ZM11 8Q12.500 10.500 11 13" /><path d="M14 6Q17 10.500 14 15M17 4Q21 10.500 17 17" stroke="#888" /></svg>
        <svg className="ml-[12px] h-[21px] w-[14px]" viewBox="0 0 14 21" fill="none" stroke="#fff" strokeWidth="1.4"><rect x="3" y="0.5" width="8" height="14" rx="1" fill="#fff" stroke="none" /><path d="M1 10V15Q1 17 3 17H11Q13 17 13 15V10M7 17V20M4 20H10" /></svg>
        <svg className="ml-[17px] size-[17px]" viewBox="0 0 17 17" fill="none" stroke="#fff" strokeWidth="1.2"><path d="M1 15Q2 3 15.500 1M4.500 16Q5 7 15.500 5.500M8.500 16Q9 10 15.500 9.500" /><circle cx="14" cy="14" r="2" fill="#fff" stroke="none" /></svg>
        <svg className="ml-[15px] size-[21px]" viewBox="0 0 21 21" fill="none" stroke="#fff" strokeWidth="1.3"><path d="M6 14L13 2Q15 0 16.500 2L10 14L6 18ZM13 8Q20 5 19.500 10Q19 13 13 11M8 10Q1 11 1 15Q1 19 5 18Q10 17 9 14" /></svg>
        <span className="ml-[21px] text-[15px] tracking-[-0.5px]">ITA</span>
        <div className="ml-[17px] w-[80px] text-center text-[15px] leading-[23px] tracking-[-0.45px]">16:36<br />30/04/2021</div>
        <svg className="ml-[21px] h-[22px] w-[22px]" viewBox="0 0 22 22" fill="none" stroke="#fff" strokeWidth="1.3"><path d="M1 1.500H20.500V17.500H14L11 20.500L8 17.500H1Z" /></svg>
        <div className="ml-[23px] mr-[5px] h-[50px] w-px bg-[#8a8582]" />
      </div>
    </div>
  );
}

export default function App() {
  return (
    <div className="flex h-[1080px] w-[1920px] flex-col overflow-hidden font-['Liberation_Sans',Arial,sans-serif]">
      <div className="flex h-[1030px] shrink-0">
        <div className="flex w-2 flex-col">
          <div className="h-[42px] bg-[#3a4043]" />
          <div className="h-[46px] bg-[#2a2b2d]" />
          <div className="flex-1 bg-linear-to-r from-[#d6d6d6] to-[#a6a6a6]" />
        </div>
        <div className="flex flex-1 flex-col">
          <header className="flex h-[62px] shrink-0 flex-col border-b-2 border-[#ececec] bg-white font-['Open_Sans',sans-serif] text-black">
            <div className="flex h-[36px] items-center pl-[10px]">
              <MaxLogo className="size-[18px]" />
              <span className="ml-[6px] text-[14.5px] tracking-[-0.13px]">cloud (unlocked)*</span>
              <div className="ml-auto flex items-center gap-[46px] pr-[17px]">
                <div className="h-px w-3 bg-black" />
                <div className="size-3 border border-black" />
                <svg className="-mr-px size-3" viewBox="0 0 12 12"><path d="M0 0L12 12M12 0L0 12" stroke="#000" strokeWidth="1.2" /></svg>
              </div>
            </div>
            <nav className="flex pl-[7.5px] pt-[4px] text-[14.5px] leading-[20px] tracking-[-0.3px]">
              {menus.map(([m, w]) => <span key={m} className={w}>{m}</span>)}
            </nav>
          </header>
          <div className="flex h-[43px] shrink-0 bg-[#333]">
            <div className="flex w-[82.5px] items-center gap-[7px] pl-[10px] font-['Open_Sans'] text-[13.5px] tracking-[-0.4px] text-[#e5e5e5]">
              78%
              <svg className="h-[7px] w-2" viewBox="0 0 8 7"><path d="M0 0H8L4 7Z" fill="#e5e5e5" /></svg>
            </div>
            {tools.map(([g, a], i) => <ToolbarIcon key={i} g={g} arrow={a} />)}
            <div className="ml-[21.5px]"><ToolbarIcon arrow={false} g={<><path d="M3 11.500L11 3.500L19 11.500L10.500 21Z" strokeWidth="1.2" /><path d="M3 11.500H18L10.500 21ZM19 11Q22.500 16 20.500 18Q18.500 18 19 11Z" fill="#e5e5e5" /><path d="M7 3L15 12M12 3L7 9" strokeWidth="1.2" /></>} /></div>
            <svg className="ml-auto mr-[38px] mt-[10px] h-6 w-[26px]" viewBox="0 0 26 24" fill="#e5e5e5">
              <path d="M12 0H22V4H12ZM23 0H26V4H23ZM0 5H7V9H0ZM8 5H11V9H8ZM12 5H22V9H12ZM23 5H26V9H23ZM0 10H7V14H0ZM8 10H11V14H8ZM12 10H22V14H12ZM23 10H26V14H23ZM0 15H7V19H0ZM8 15H11V19H8ZM12 15H22V19H12ZM23 15H26V19H23ZM0 20H7V24H0ZM8 20H11V24H8ZM12 20H15V24H12Z" />
              <path d="M15 20H19V24H15Z" fill="#edcf1c" />
            </svg>
          </div>
          <div className="flex h-[892px] shrink-0">
            <aside className="flex w-[43px] flex-col items-center bg-[#333] pt-[181px]">
              {leftIcons.map((ic, i) => <div key={i} className="flex h-[46.25px] items-center">{ic}</div>)}
            </aside>
            <Patcher />
            <aside className="flex w-[35px] flex-col items-end overflow-hidden bg-[#333] pr-[1px] pt-[199px]">
              {rightIcons.map(([h, ic], i) => <div key={i} className={`flex shrink-0 items-start ${h}`}>{ic}</div>)}
              <div className="mt-[233px]"><Meter /></div>
            </aside>
          </div>
          <footer className="flex h-[33px] shrink-0 items-center overflow-hidden bg-[#333] pt-[9px]">
            <div className="flex w-[42px] justify-center">{bottomIcons[0]}</div>
            <div className="flex w-[39px] justify-center">{bottomIcons[1]}</div>
            {bottomIcons.slice(2).map((ic, i) => <div key={i} className={`flex w-[57.5px] justify-center ${i === 0 ? "ml-[8px]" : ""}`}>{ic}</div>)}
            <svg className="ml-auto mr-[41px] size-7" viewBox="0 0 28 28" fill="none"><circle cx="14" cy="14" r="11.5" stroke="#5c5c5c" strokeWidth="5" strokeDasharray="17 1.06" strokeDashoffset="-0.5" /><path d="M10.500 9L19 14L10.500 19Z" fill="#e5e5e5" /></svg>
            <svg className="mr-[3px] size-5" viewBox="0 0 20 20" fill="none" stroke="#ffa566" strokeWidth="2.5" strokeLinecap="round"><path d="M5 4.500A7.600 7.600 0 1 0 15 4.500M10 1.500V10" /></svg>
          </footer>
        </div>
      </div>
      <Taskbar />
    </div>
  );
}
